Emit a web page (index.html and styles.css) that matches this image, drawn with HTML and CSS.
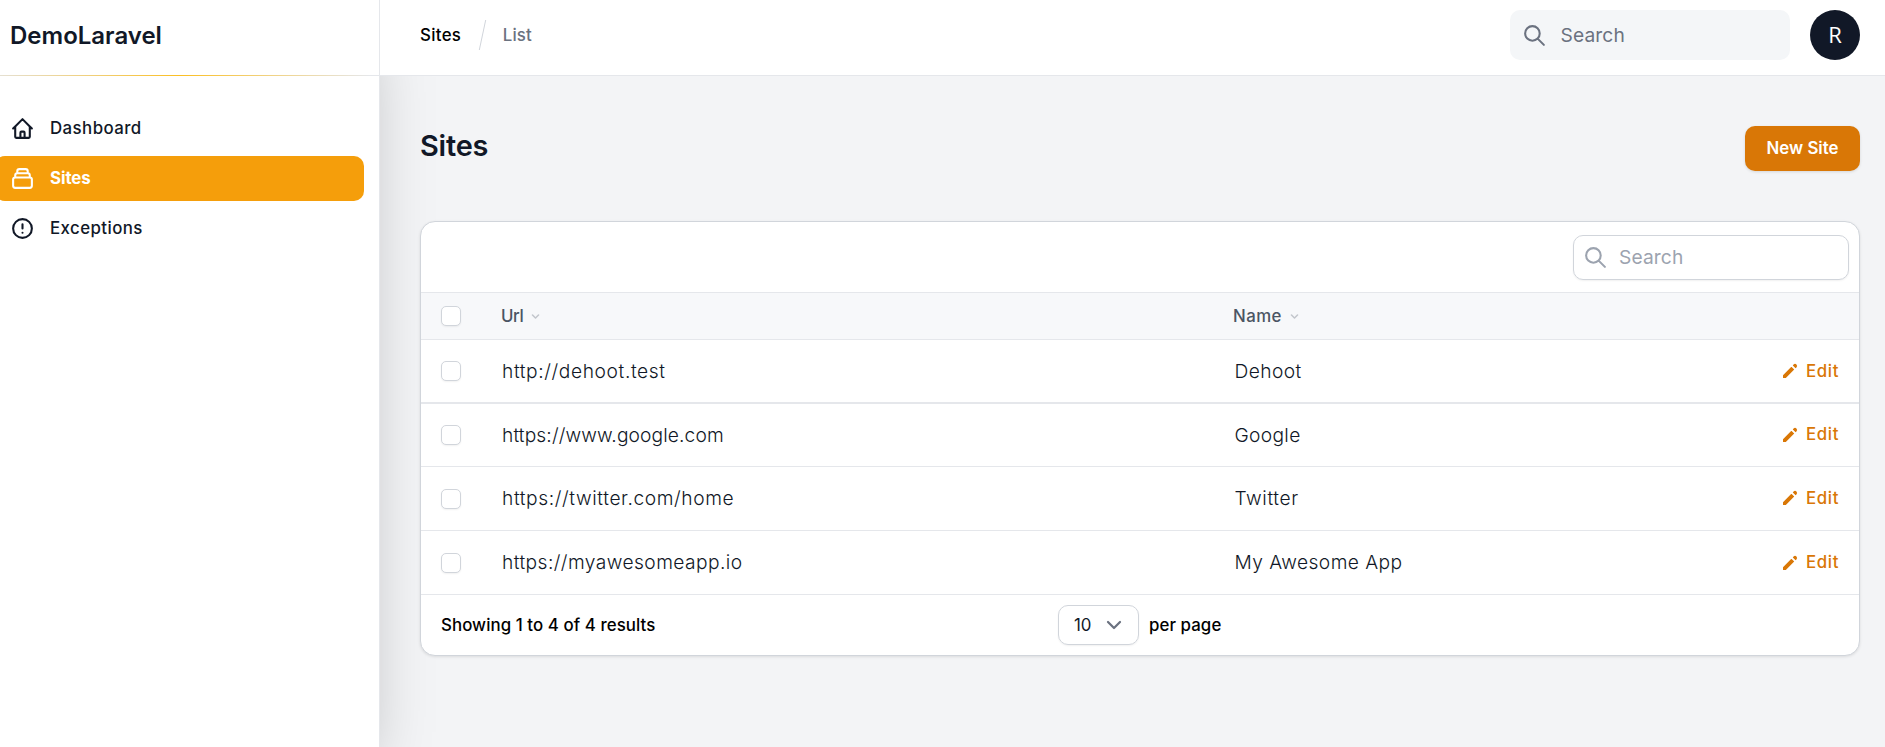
FILE: index.html
```html
<!DOCTYPE html>
<html lang="en">
<head>
<meta charset="utf-8">
<title>Sites - DemoLaravel</title>
<link rel="stylesheet" href="styles.css">
</head>
<body>
<svg class="sprite" aria-hidden="true">
  <symbol id="search" viewBox="0 0 24 24"><path fill="none" stroke="currentColor" stroke-width="2" stroke-linecap="round" stroke-linejoin="round" d="M21 21l-6-6m2-5a7 7 0 11-14 0 7 7 0 0114 0z"/></symbol>
  <symbol id="sort" viewBox="0 0 20 20"><path fill="currentColor" fill-rule="evenodd" d="M5.293 7.293a1 1 0 011.414 0L10 10.586l3.293-3.293a1 1 0 111.414 1.414l-4 4a1 1 0 01-1.414 0l-4-4a1 1 0 010-1.414z"/></symbol>
  <symbol id="pencil" viewBox="0 0 20 20"><path fill="currentColor" d="M13.586 3.586a2 2 0 112.828 2.828l-.793.793-2.828-2.828.793-.793zM11.379 5.793L3 14.172V17h2.828l8.38-8.379-2.83-2.828z"/></symbol>
</svg>
<div class="app">
  <aside class="sidebar">
    <div class="brand"><span>DemoLaravel</span></div>
    <nav class="nav">
      <a class="nav-item ls-4"><svg class="icon" viewBox="0 0 24 24"><path d="M3 12l2-2m0 0l7-7 7 7M5 10v10a1 1 0 001 1h3m10-11l2 2m-2-2v10a1 1 0 01-1 1h-3m-6 0a1 1 0 001-1v-4a1 1 0 011-1h2a1 1 0 011 1v4a1 1 0 001 1m-6 0h6"/></svg>Dashboard</a>
      <a class="nav-item active"><svg class="icon" viewBox="0 0 24 24"><path d="M19 11H5m14 0a2 2 0 012 2v6a2 2 0 01-2 2H5a2 2 0 01-2-2v-6a2 2 0 012-2m14 0V9a2 2 0 00-2-2M5 11V9a2 2 0 012-2m0 0V5a2 2 0 012-2h6a2 2 0 012 2v2M7 7h10"/></svg>Sites</a>
      <a class="nav-item ls-4"><svg class="icon" viewBox="0 0 24 24"><path d="M12 8v4m0 4h.01M21 12a9 9 0 11-18 0 9 9 0 0118 0z"/></svg>Exceptions</a>
    </nav>
  </aside>
  <div class="page">
    <header class="topbar">
      <div class="crumbs"><span class="ls-3">Sites</span><i class="slash"></i><span class="muted ls-1">List</span></div>
      <div class="global-search"><svg class="icon"><use href="#search"/></svg><span class="ls-1">Search</span></div>
      <div class="avatar">R</div>
    </header>
    <main class="content">
      <div class="heading"><h1>Sites</h1><button class="btn">New Site</button></div>
      <section class="card">
        <div class="toolbar"><div class="table-search"><svg class="icon"><use href="#search"/></svg><span class="ls-1">Search</span></div></div>
        <div class="row head"><i class="box"></i><span class="label tight">Url<svg class="sort"><use href="#sort"/></svg></span><span class="label ls-4">Name<svg class="sort"><use href="#sort"/></svg></span></div>
        <div class="row thick"><i class="box"></i><span class="ls-6">http://dehoot.test</span><span class="ls-4">Dehoot</span><a class="edit"><svg class="pencil"><use href="#pencil"/></svg>Edit</a></div>
        <div class="row short"><i class="box"></i><span class="ls-1">https://www.google.com</span><span class="ls-3">Google</span><a class="edit raised"><svg class="pencil"><use href="#pencil"/></svg>Edit</a></div>
        <div class="row"><i class="box"></i><span class="ls-6">https://twitter.com/home</span><span class="ls-6">Twitter</span><a class="edit raised"><svg class="pencil"><use href="#pencil"/></svg>Edit</a></div>
        <div class="row"><i class="box"></i><span class="ls-4">https://myawesomeapp.io</span><span class="ls-4">My Awesome App</span><a class="edit"><svg class="pencil"><use href="#pencil"/></svg>Edit</a></div>
        <footer class="pager">
          <span class="summary">Showing 1 to 4 of 4 results</span>
          <div class="select"><span>10</span><svg class="caret" viewBox="0 0 20 20"><path d="M6 8l4 4 4-4"/></svg></div>
          <span class="per-page">per page</span>
        </footer>
      </section>
    </main>
  </div>
</div>
</body>
</html>
```
FILE: styles.css
```css
* { box-sizing: border-box; }
body { margin: 0; height: 747px; overflow: hidden; background: #f3f4f6; color: #111827; font: 450 16.85px/25px "Inter", "Liberation Sans", sans-serif; }
.sprite { display: none; }
.app { display: grid; grid-template-columns: 380px 1fr; height: 747px; }
.icon { width: 25px; height: 25px; flex: none; fill: none; stroke: currentColor; stroke-width: 2; stroke-linecap: round; stroke-linejoin: round; }

.ls-1 { letter-spacing: .12px; }
.ls-3 { letter-spacing: .32px; }
.ls-4 { letter-spacing: .43px; }
.ls-6 { letter-spacing: .6px; }
.tight { letter-spacing: -.4px; }

.sidebar { background: #fff; border-right: 1px solid #e5e7eb; box-shadow: 0 31px 62px -15px rgba(0, 0, 0, .25); }
.brand { height: 76px; display: flex; align-items: center; padding: 0 0 5px 10px; font-size: 24px; font-weight: 600; background: linear-gradient(90deg, #e5e0d2 0, #fbbf24 180px, #e5e7eb 370px) bottom / 100% 1px no-repeat; }
.nav { display: flex; flex-direction: column; gap: 5px; padding: 30px 15px 0 0; margin-left: -5px; }
.nav-item { height: 45px; display: flex; align-items: center; gap: 15px; padding-left: 15px; border-radius: 10px; }
.nav-item.active { background: #f59e0b; color: #fff; font-weight: 700; letter-spacing: -.1px; }

.page { display: flex; flex-direction: column; }
.topbar { position: relative; z-index: 1; height: 76px; display: flex; align-items: center; padding: 0 25px 5px 40px; background: #fff; border-bottom: 1px solid #e5e7eb; }
.crumbs { display: flex; align-items: center; flex: 1; }
.slash { width: 1px; height: 30px; margin: 0 20px 0 20.5px; background: #d1d5db; transform: skewX(-12deg); }
.crumbs .muted { color: #6b7280; }
.global-search { width: 280px; height: 50px; margin-right: 20px; display: flex; align-items: center; gap: 13.5px; padding-left: 12px; border-radius: 10px; background: #f4f6f8; color: #6b7280; font-size: 19.2px; font-weight: 400; }
.avatar { width: 50px; height: 50px; border-radius: 50%; display: flex; align-items: center; justify-content: center; background: #111827; color: #fff; font: 400 22px/48px "Open Sans", sans-serif; padding-bottom: 2px; }

.content { padding: 50px 25px 0 40px; }
.heading { display: flex; justify-content: space-between; align-items: flex-start; height: 95px; }
h1 { margin: 0; font-size: 28.9px; line-height: 40px; font-weight: 600; letter-spacing: -.2px; }
.btn { width: 115px; height: 45px; border: 0; border-radius: 10px; background: #d97706; color: #fff; font: inherit; font-weight: 600; padding: 0; box-shadow: 0 1px 3px rgba(0, 0, 0, .12); }

.card { height: 435px; display: flex; flex-direction: column; border: 1px solid #d1d5db; border-radius: 15px; background: #fff; box-shadow: 0 1px 3px rgba(0, 0, 0, .1); }
.toolbar { height: 71px; display: flex; justify-content: flex-end; padding: 13px 10px 0 0; border-bottom: 1px solid #e5e7eb; }
.table-search { width: 276px; height: 45px; display: flex; align-items: center; gap: 11px; padding-left: 9px; border: 1px solid #d1d5db; border-radius: 10px; box-shadow: 0 1px 2px rgba(0, 0, 0, .06); color: #9ca3af; font-size: 19.2px; font-weight: 400; }
.row { height: 64px; display: grid; grid-template-columns: 61px 732.5px 1fr auto; align-items: center; padding: 0 20px; border-bottom: 1px solid #e5e7eb; font-size: 19.2px; font-weight: 300; }
.row.thick { border-bottom-width: 2px; }
.row.short { height: 63px; }
.row.head { height: 47px; grid-template-columns: 60px 732px 1fr; background: #f7f8fa; color: #4b5563; font-size: 16.85px; font-weight: 550; }
.box { width: 20px; height: 20px; border: 1px solid #d1d5db; border-radius: 5px; background: #fff; box-shadow: 0 1px 2px rgba(0, 0, 0, .06); }
.label { display: flex; align-items: center; gap: 5px; }
.sort { width: 15px; height: 15px; opacity: .3; }
.edit { display: flex; align-items: center; gap: 6px; color: #d97706; font-size: 16.85px; font-weight: 550; letter-spacing: .6px; }
.edit.raised { padding-bottom: 1px; }
.pencil { width: 20px; height: 20px; }
.pager { flex: 1; display: grid; grid-template-columns: 617px 81px 1fr; align-items: center; padding: 0 20px; }
.select { height: 40px; display: flex; align-items: center; justify-content: space-between; padding: 0 9px 0 15px; border: 1px solid #d1d5db; border-radius: 10px; box-shadow: 0 1px 2px rgba(0, 0, 0, .06); font-weight: 400; }
.caret { width: 30px; height: 30px; fill: none; stroke: #6b7280; stroke-width: 1.5; stroke-linecap: round; stroke-linejoin: round; }
.per-page { padding-left: 10px; }
.summary, .per-page, .crumbs { color: #000; }
.summary, .per-page { letter-spacing: .07px; }
```
